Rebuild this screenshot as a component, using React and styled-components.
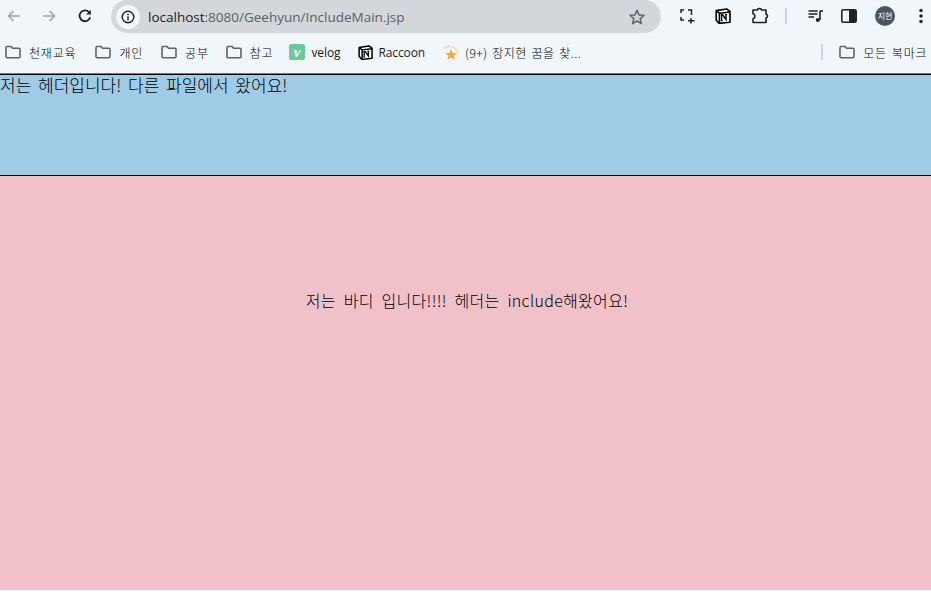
import React from 'react';
import styled, { createGlobalStyle } from 'styled-components';

const GlobalStyle = createGlobalStyle`
  html, body {
    margin: 0;
    padding: 0;
    background: #fff;
  }
  body {
    width: 931px;
    height: 603px;
    overflow: hidden;
    font-family: "Noto Sans CJK KR", "Noto Sans", sans-serif;
  }
`;

const Toolbar = styled.div`
  display: flex;
  align-items: flex-start;
  height: 33px;
  background: #f1f6fb;
`;

const NavButton = styled.span`
  display: flex;
  align-items: center;
  justify-content: center;
  flex: none;
  width: ${p => p.$w || 35}px;
  height: 31px;
  color: ${p => p.$color || '#45484c'};
`;

const NavGroup = styled.div`
  display: flex;
  padding-left: ${p => p.$left || 0}px;
`;

const AddressBar = styled.div`
  display: flex;
  align-items: center;
  flex: none;
  box-sizing: border-box;
  width: 550px;
  height: 33px;
  margin-left: 11px;
  padding: 0 15px 0 5px;
  background: #d3d7dc;
  border-radius: 17px;
`;

const InfoBadge = styled.span`
  display: flex;
  align-items: center;
  justify-content: center;
  flex: none;
  width: 24px;
  height: 24px;
  border-radius: 50%;
  background: #f1f6fb;
`;

const Url = styled.span`
  flex: 1;
  margin-left: 8px;
  font-family: "Open Sans", sans-serif;
  font-size: 13.5px;
  color: #5c6066;
  white-space: nowrap;
  b {
    font-weight: 400;
    color: #1f2124;
  }
`;

const Avatar = styled.span`
  display: flex;
  align-items: center;
  justify-content: center;
  width: 20px;
  height: 20px;
  border-radius: 50%;
  background: #4a5661;
  color: #fff;
  font-size: 8px;
`;

const Divider = styled.span`
  flex: none;
  width: 2px;
  height: 16px;
  background: #c5d5ec;
  margin: ${p => p.$margin};
`;

const BookmarkBar = styled.div`
  display: flex;
  align-items: center;
  box-sizing: border-box;
  height: 41px;
  padding: 0 0 2px 5px;
  background: #f1f6fb;
  border-bottom: 1px solid #777;
`;

const Bookmark = styled.span`
  display: flex;
  align-items: center;
  gap: ${p => p.$gap || 8}px;
  margin-right: ${p => p.$after || 18}px;
  font-size: 12px;
  font-weight: 300;
  letter-spacing: ${p => p.$spacing || 0.8}px;
  word-spacing: 1.5px;
  color: #000;
  white-space: nowrap;
`;

const Latin = styled.span`
  font-family: "Open Sans", sans-serif;
  font-size: 12px;
  font-weight: 400;
  letter-spacing: -0.1px;
  color: #1f2124;
`;

const VelogIcon = styled.span`
  display: flex;
  align-items: center;
  justify-content: center;
  width: 16px;
  height: 16px;
  border-radius: 2px;
  background: #6fc79c;
  color: #fff;
  font-family: "Liberation Serif", serif;
  font-style: italic;
  font-weight: 700;
  font-size: 15px;
  line-height: 14px;
`;

const Header = styled.header`
  box-sizing: border-box;
  height: 102px;
  background: #9fcbe7;
  border-top: 1px solid #000;
  border-bottom: 1px solid #000;
  font-size: 17px;
  font-weight: 300;
  word-spacing: 3px;
  line-height: 20px;
  color: #000;
`;

const Main = styled.main`
  box-sizing: border-box;
  height: 414px;
  padding: 112px 0 0 3px;
  background: #f1c1ca;
  text-align: center;
  font-size: 16px;
  font-weight: 300;
  letter-spacing: 0.3px;
  word-spacing: 4px;
  line-height: 24px;
  color: #000;
`;

const Folder = () => (
  <svg width="16" height="16" viewBox="0 0 16 16" fill="none" stroke="#5f6368" strokeWidth="1.6">
    <path d="M1 3.5C1 2.9 1.4 2.5 2 2.5H6L7.6 4.2H14C14.6 4.2 15 4.6 15 5.2V12.8C15 13.4 14.6 13.8 14 13.8H2C1.4 13.8 1 13.4 1 12.8Z" />
  </svg>
);

const NotionMark = ({ size = 15 }) => (
  <svg width={size} height={size} viewBox="0 0 16 16">
    <path d="M1.2 2.6L11.6 1L15 3.4V14.2L4 15.4L1.2 12Z" fill="#fff" stroke="#000" strokeWidth="1.6" strokeLinejoin="round" />
    <path d="M1.6 3L4.4 5.2V15" fill="none" stroke="#000" strokeWidth="1.6" />
    <path d="M4.4 5.2L15 4" fill="none" stroke="#000" strokeWidth="1.4" />
    <path d="M6.6 12.6V7H7.8L11 11.6V6.6" fill="none" stroke="#000" strokeWidth="1.4" />
    <path d="M5.6 12.8H7.8M10 6.6H12.2M5.8 7H7.6" fill="none" stroke="#000" strokeWidth="1" />
  </svg>
);

const App = () => (
  <>
    <GlobalStyle />
    <Toolbar>
      <NavGroup>
        <NavButton $w={28} $color="#a0a4a8">
          <svg width="16" height="16" viewBox="0 0 16 16" fill="none" stroke="currentColor" strokeWidth="1.6">
            <path d="M14 8H2.5M7.5 3L2.5 8L7.5 13" />
          </svg>
        </NavButton>
        <NavButton $w={42} $color="#a0a4a8">
          <svg width="16" height="16" viewBox="0 0 16 16" fill="none" stroke="currentColor" strokeWidth="1.6">
            <path d="M2 8H13.5M8.5 3L13.5 8L8.5 13" />
          </svg>
        </NavButton>
        <NavButton $w={30} $color="#202124">
          <svg width="16" height="16" viewBox="0 0 16 16" fill="none" stroke="currentColor" strokeWidth="1.8">
            <path d="M13.2 9.2A5.4 5.4 0 1 1 12 4.2" />
            <path d="M13.8 1.8V6.4H9.2Z" fill="currentColor" stroke="none" />
          </svg>
        </NavButton>
      </NavGroup>
      <AddressBar>
        <InfoBadge>
          <svg width="14" height="14" viewBox="0 0 14 14" fill="none" stroke="#202124" strokeWidth="1.4">
            <circle cx="7" cy="7" r="5.8" />
            <path d="M7 6.2V10.2M7 3.8V5.2" />
          </svg>
        </InfoBadge>
        <Url><b>localhost</b>:8080/Geehyun/IncludeMain.jsp</Url>
        <svg width="18" height="18" viewBox="0 0 18 18" fill="none" stroke="#5f6368" strokeWidth="1.5">
          <path d="M9 2.2L11 6.9L16 7.3L12.2 10.6L13.4 15.6L9 13L4.6 15.6L5.8 10.6L2 7.3L7 6.9Z" strokeLinejoin="round" />
        </svg>
      </AddressBar>
      <NavGroup $left={8}>
        <NavButton $w={36} $color="#202124">
          <svg width="16" height="16" viewBox="0 0 16 16" fill="none" stroke="currentColor" strokeWidth="1.5">
            <path d="M5 2H2V5M2 9V12H5M9 2H12.5V7M12 10V15.5M9 12.8H15.5" />
          </svg>
        </NavButton>
        <NavButton $w={36}>
          <NotionMark size={16} />
        </NavButton>
        <NavButton $w={38} $color="#202124">
          <svg width="18" height="18" viewBox="0 0 18 18" fill="none" stroke="currentColor" strokeWidth="1.6" strokeLinejoin="round">
            <path d="M2 3H6.5C6.5 1 10.5 1 10.5 3H15V7.2C17 7.2 17 10.8 15 10.8V15.5H2V11.5C4.5 11.5 4.5 7 2 7Z" />
          </svg>
        </NavButton>
        <NavButton $w={13}>
          <Divider />
        </NavButton>
        <NavButton $w={48} $color="#202124">
          <svg width="16" height="16" viewBox="0 0 16 16" fill="none" stroke="currentColor" strokeWidth="1.5">
            <path d="M0.5 3H9.5M0.5 6H9.5M0.5 9H6" />
            <path d="M12 3V12" strokeWidth="1.6" />
            <path d="M12 3H15" strokeWidth="1.6" />
            <circle cx="9.8" cy="12" r="2" fill="currentColor" stroke="none" />
          </svg>
        </NavButton>
        <NavButton $w={18} $color="#202124">
          <svg width="16" height="14" viewBox="0 0 16 14" fill="none">
            <rect x="0.8" y="0.8" width="14.4" height="12.4" rx="1.5" stroke="currentColor" strokeWidth="1.6" />
            <rect x="8" y="1" width="7" height="12" fill="currentColor" />
          </svg>
        </NavButton>
        <NavButton $w={54}>
          <Avatar>지현</Avatar>
        </NavButton>
        <NavButton $w={18} $color="#202124">
          <svg width="4" height="16" viewBox="0 0 4 16" fill="currentColor">
            <circle cx="2" cy="2.5" r="1.7" />
            <circle cx="2" cy="8" r="1.7" />
            <circle cx="2" cy="13.5" r="1.7" />
          </svg>
        </NavButton>
      </NavGroup>
    </Toolbar>
    <BookmarkBar>
      <Bookmark $after={19}><Folder />천재교육</Bookmark>
      <Bookmark $after={18}><Folder />개인</Bookmark>
      <Bookmark $after={17}><Folder />공부</Bookmark>
      <Bookmark $after={16}><Folder />참고</Bookmark>
      <Bookmark $after={18} $gap={6}><VelogIcon>v</VelogIcon><Latin>velog</Latin></Bookmark>
      <Bookmark $after={18} $gap={5}><NotionMark /><Latin>Raccoon</Latin></Bookmark>
      <Bookmark $after={240} $gap={6} $spacing={0.5}>
        <svg width="16" height="16" viewBox="0 0 16 16">
          <path d="M1 5C3 1.5 12 0.5 15 9" fill="none" stroke="#f3dca8" strokeWidth="1.6" />
          <path d="M8 4.8L9.6 9L14 9.2L10.6 11.8L11.8 15.8L8 13.5L4.2 15.8L5.4 11.8L2 9.2L6.4 9Z" fill="#f0a93f" />
        </svg>
        (9+) 장지현 꿈을 찾...
      </Bookmark>
      <Divider $margin="0 16px 0 0" />
      <Bookmark $after={1}><Folder />모든 북마크</Bookmark>
    </BookmarkBar>
    <Header>저는 헤더입니다! 다른 파일에서 왔어요!</Header>
    <Main>저는 바디 입니다!!!! 헤더는 include해왔어요!</Main>
  </>
);

export default App;
